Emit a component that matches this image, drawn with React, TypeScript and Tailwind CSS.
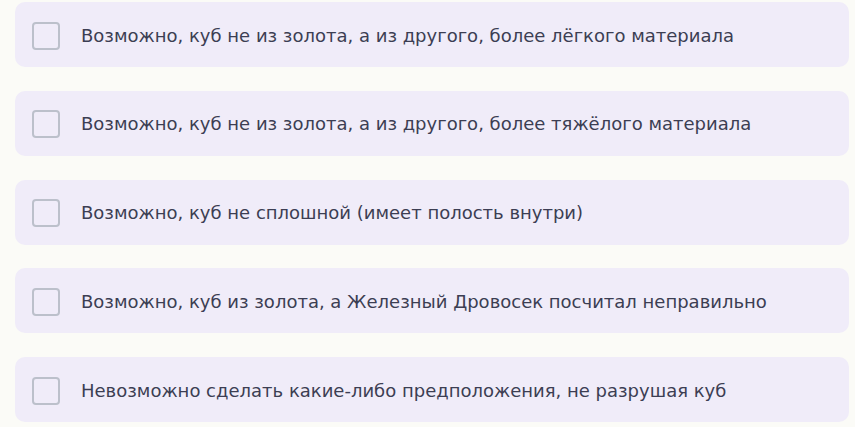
import React from "react";

const items = [
  "Возможно, куб не из золота, а из другого, более лёгкого материала",
  "Возможно, куб не из золота, а из другого, более тяжёлого материала",
  "Возможно, куб не сплошной (имеет полость внутри)",
  "Возможно, куб из золота, а Железный Дровосек посчитал неправильно",
  "Невозможно сделать какие-либо предположения, не разрушая куб",
];

export default function App() {
  return (
    <div className="w-[855px] h-[427px] bg-[#fbfbf7] overflow-hidden">
      <div className="flex flex-col gap-[23.75px] pt-[2px] pl-[15px] pr-[6px]">
        {items.map((t) => (
          <label
            key={t}
            className="flex items-center h-[65px] rounded-[10px] bg-[#f0ecf9] pl-[17px] pr-4"
          >
            <span className="w-[28px] h-[28px] shrink-0 rounded-[4px] border-2 border-[#bcc0cb] bg-transparent mt-[2px]" />
            <span
              className="ml-[21px] text-[18px] text-[#3c3e53] mt-[1px]"
              style={{ fontFamily: "'DejaVu Sans', sans-serif" }}
            >
              {t}
            </span>
          </label>
        ))}
      </div>
    </div>
  );
}
